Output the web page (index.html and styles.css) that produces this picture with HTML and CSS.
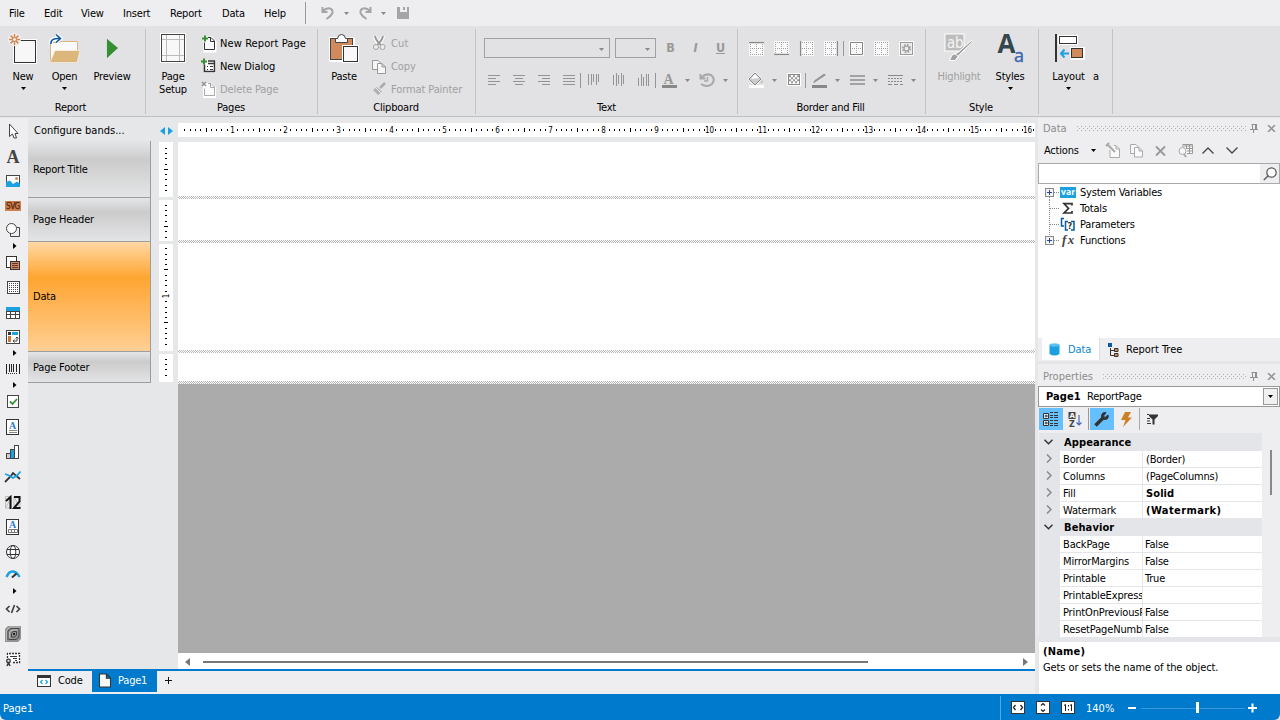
FILE: index.html
```html
<!DOCTYPE html>
<html lang="en">
<head>
<meta charset="utf-8">
<title>Report Designer</title>
<link rel="stylesheet" href="styles.css">
</head>
<body>
<svg class="defs">
  <symbol id="caret" viewBox="0 0 5 3"><path d="M0 0H5L2.5 3Z" fill="currentColor"/></symbol>
  <symbol id="flyout" viewBox="0 0 4 6"><path d="M0 0L3.5 3L0 6Z" fill="#000"/></symbol>
  <symbol id="cells" viewBox="0 0 15 15"><rect width="15" height="15" fill="#fafafa"/><path d="M1 1.5H14M1 7.5H14M1 13.5H14M1.5 1V14M7.5 1V14M13.5 1V14" stroke="#a0a0a0" stroke-dasharray="1 1"/></symbol>
  <symbol id="pin" viewBox="0 0 8 9"><path d="M2.5 0V5M1.500 .5H6M5.500 0V5M6.500 0V5M0 5.500H8M3.500 6V9" fill="none" stroke="#909090"/></symbol>
  <symbol id="close" viewBox="0 0 9 7"><path d="M1 0L8 7M8 0L1 7" stroke="#909090" stroke-width="1.500"/></symbol>
  <symbol id="page" viewBox="0 0 13 15"><path d="M.5 .5H8L12.500 5V14.500H.5ZM8 .5V5H12.500" fill="#f8f8f8" stroke="currentColor" stroke-width="1.200"/></symbol>
  <symbol id="right" viewBox="0 0 6 9"><path d="M1 .5L5 4.500L1 8.500" fill="none" stroke="#888" stroke-width="1.500"/></symbol>
  <symbol id="down" viewBox="0 0 9 6"><path d="M.5 .7L4.500 4.700L8.500 .7" fill="none" stroke="#333" stroke-width="1.500"/></symbol>
  <symbol id="plusbox" viewBox="0 0 9 9"><rect x=".5" y=".5" width="8" height="8" fill="#f4f4f4" stroke="#888"/><path d="M2 4.500H7M4.500 2V7" stroke="#204a9c"/></symbol>
</svg>

<nav class="menubar">
  <span class="m1">File</span><span class="m2">Edit</span><span class="m3">View</span><span class="m4">Insert</span><span class="m5">Report</span><span class="m6">Data</span><span class="m7">Help</span>
  <div class="quick">
    <svg width="13" height="14" viewBox="0 0 13 14"><path d="M1.500 1V6H6.500M2 5Q5 2 8 2.200Q12 2.800 11.500 7Q10 10.500 5.500 13" fill="none" stroke="#a5a5a5" stroke-width="2"/></svg>
    <svg class="caret" width="5" height="3"><use href="#caret"/></svg>
    <svg width="13" height="14" viewBox="0 0 13 14"><path d="M11.500 1V6H6.500M11 5Q8 2 5 2.200Q1 2.800 1.500 7Q3 10.500 7.500 13" fill="none" stroke="#a5a5a5" stroke-width="2"/></svg>
    <svg class="caret" width="5" height="3"><use href="#caret"/></svg>
    <svg width="12" height="12" viewBox="0 0 12 12"><path d="M0 0H3V5H10V0H12V12H0Z M6 0H8V3H6Z" fill="#a5a5a5"/></svg>
  </div>
</nav>

<header class="ribbon">
  <section class="group g-report">
    <div class="tools">
      <button class="big b-new"><svg width="28" height="32" viewBox="0 0 28 32"><rect x="4" y="6" width="24" height="25" fill="#fff"/><rect x="5.500" y="7.500" width="21" height="22" fill="#f7f7f7" stroke="#333"/><circle cx="5.500" cy="6.500" r="6.500" fill="#f4f0ee"/><path d="M5.500 1V12M0 6.500H11M1.600 2.600L9.400 10.400M9.400 2.600L1.600 10.400" stroke="#d18659" stroke-width="1.500"/><circle cx="5.500" cy="6.500" r="2" fill="#f4e8e0" stroke="#d18659"/></svg><b>New</b><svg class="ddl" width="5" height="3"><use href="#caret"/></svg></button>
      <button class="big b-open"><svg width="32" height="32" viewBox="0 0 32 32"><path d="M1.500 30V9.500H10L12 8.500H28.500V18" fill="#fafafa" stroke="#ddb67b"/><path d="M1 29.500L6 17.500H31L28 29.500Z" fill="#ddb67b" stroke="#fff" stroke-width=".5"/><path d="M2 11Q1 5 10 5.500M7 1.500L11.500 5.500L7 9.500" fill="none" stroke="#fff" stroke-width="4"/><path d="M2 11Q1 5 11 5.500M7 1.500L11.500 5.500L7 9.500" fill="none" stroke="#0b5aa6" stroke-width="1.600"/></svg><b>Open</b><svg class="ddl" width="5" height="3"><use href="#caret"/></svg></button>
      <button class="big b-preview"><svg width="14" height="32" viewBox="0 0 14 32"><path d="M1.500 5L13.500 15L1.500 26Z" fill="#388e34" stroke="#fff" stroke-width=".6"/></svg><b>Preview</b></button>
    </div>
    <h3>Report</h3>
  </section>
  <section class="group g-pages">
    <div class="tools">
      <button class="big b-setup"><svg width="26" height="32" viewBox="0 0 26 32"><rect width="26" height="30" y="0" fill="#fff"/><rect x="1.500" y="1.500" width="23" height="27" fill="#f8f8f8" stroke="#444"/><path d="M6.500 2V28M19.500 2V28M2 6.500H24M2 22.500H24" stroke="#bbb"/></svg><b>Page<br>Setup</b></button>
      <ul class="commands">
        <li><svg width="15" height="17" viewBox="0 0 15 17"><path d="M4 3H10.500L14 7V16H4Z" fill="#fff" stroke="#fff" stroke-width="3"/><path d="M3.500 7.500V14.500H13.500V6L10 2.500H7M9.500 3V6.500H13" fill="#fafafa" stroke="#333"/><path d="M1 3.500H7M4 .5V6.500" stroke="#388e34" stroke-width="2"/></svg>New Report Page</li>
        <li><svg width="15" height="17" viewBox="0 0 15 17"><path d="M3 2H15V15H3Z" fill="#fff"/><path d="M3.500 6.500V13.500H13.500V3H7M7 5.500H13.500" fill="none" stroke="#333" stroke-width="1.500"/><path d="M6 8.500H7M9 8.500H12M6 11.500H7M9 11.500H12" stroke="#333"/><path d="M0 3.500H6M3 .5V6.500" stroke="#388e34" stroke-width="2"/></svg>New Dialog</li>
        <li class="off"><svg width="15" height="17" viewBox="0 0 15 17"><path d="M3 3H10.500L14 7V16H3Z" fill="#fff" stroke="#fff" stroke-width="2"/><path d="M3.500 7.500V14.500H13.500V6L10 2.500H7M9.500 3V6.500H13" fill="#fafafa" stroke="#aaa"/><path d="M1 1L5 5M5 1L1 5" stroke="#909090" stroke-width="1.500"/></svg>Delete Page</li>
      </ul>
    </div>
    <h3>Pages</h3>
  </section>
  <section class="group g-clip">
    <div class="tools">
      <button class="big b-paste"><svg width="30" height="32" viewBox="0 0 30 32"><path d="M0 4H26V29H0Z" fill="#fff"/><rect x="1.500" y="5.500" width="22" height="21" fill="#d18a5c" stroke="#444"/><path d="M6.500 9.500V5.500H8.500Q9 1.500 12.500 1.500T16.500 5.500H18.500V9.500Z" fill="#fafafa" stroke="#444"/><rect x="13" y="12" width="17" height="18" fill="#fff"/><rect x="14.500" y="13.500" width="14" height="15" fill="#f8f8f8" stroke="#333"/></svg><b>Paste</b></button>
      <ul class="commands off">
        <li><svg width="15" height="17" viewBox="0 0 15 17"><path d="M3 1Q4 6 9 10M11 1Q10 6 5 10" fill="none" stroke="#fff" stroke-width="4"/><path d="M3 1Q4 6 9.500 10.500M11 1Q10 6 4.500 10.500" fill="none" stroke="#999" stroke-width="2"/><circle cx="4" cy="12" r="2.500" fill="#eee" stroke="#a0a0a0"/><circle cx="10.500" cy="12" r="2.500" fill="#eee" stroke="#a0a0a0"/></svg>Cut</li>
        <li><svg width="15" height="17" viewBox="0 0 15 17"><path d="M.5 2.500H6L8.500 5V11.500H.5Z" fill="#f6f6f6" stroke="#999"/><path d="M5.500 5.500H10L13.500 9V15.500H5.500ZM10 5.500V9H13.500" fill="#f8f8f8" stroke="#999"/></svg>Copy</li>
        <li><svg width="15" height="17" viewBox="0 0 15 17"><path d="M13 2L8 7" stroke="#aaa" stroke-width="2.500"/><path d="M5 6L10 11L6 14L1 9Z" fill="#b0b0b0"/><path d="M4 7L9 12" stroke="#eee"/></svg>Format Painter</li>
      </ul>
    </div>
    <h3>Clipboard</h3>
  </section>
  <section class="group g-text">
    <div class="tools rows">
      <div class="row r-top">
        <div class="field f-font"><svg class="caret" width="5" height="3"><use href="#caret"/></svg></div>
        <div class="field f-size"><svg class="caret" width="5" height="3"><use href="#caret"/></svg></div>
        <span class="ch bold">B</span><span class="ch bold ital">I</span><span class="ch bold under">U</span>
      </div>
      <div class="row">
        <svg width="254" height="20" viewBox="484 70 254 20"><g stroke="#949494"><path d="M488 75.500H500M488 78.500H496M488 81.500H500M488 84.500H496M513 75.500H525M515 78.500H523M513 81.500H525M515 84.500H523M538 75.500H550M542 78.500H550M538 81.500H550M542 84.500H550M563 75.500H575M563 78.500H575M563 81.500H575M563 84.500H575"/><path d="M588.500 74V85M591.500 74V85M593.500 74V82M596.500 74V85M598.500 74V82M613.500 75V85M616.500 73V86M618.500 75V84M621.500 73V86M623.500 75V84M638.500 78V86M641.500 74V86M643.500 77V86M646.500 74V86M648.500 74V86"/><path d="M580.500 73V88M655.500 73V88"/></g><text x="663.500" y="83.500" class="serif-a">A</text><path d="M662 85H677V88H662Z" fill="#888"/><path d="M685 79H690L687.500 82ZM723 79H728L725.500 82Z" fill="#888"/><path d="M700.500 74V78.500H705.500M701.500 77.500Q706 73 711 75Q716 79 712 84Q707 88 701 84" fill="none" stroke="#a8a8a8" stroke-width="2"/><path d="M707.500 77V81H704" fill="none" stroke="#aaa" stroke-width="1.500"/></svg>
      </div>
    </div>
    <h3>Text</h3>
  </section>
  <section class="group g-border">
    <div class="tools rows">
      <div class="row frames">
        <svg width="15" height="15"><use href="#cells"/><path d="M0 1.500H15" stroke="#888" stroke-width="1.500"/></svg><svg width="15" height="15"><use href="#cells"/><path d="M0 13.500H15" stroke="#888" stroke-width="1.500"/></svg><svg width="15" height="15"><use href="#cells"/><path d="M1.500 0V15" stroke="#888" stroke-width="1.500"/></svg><svg class="rule-after" width="15" height="15"><use href="#cells"/><path d="M13.500 0V15" stroke="#888" stroke-width="1.500"/></svg><svg width="15" height="15"><use href="#cells"/><path d="M1.500 1.500H13.500V13.500H1.500Z" fill="none" stroke="#888"/></svg><svg width="15" height="15"><use href="#cells"/></svg><svg width="15" height="15" viewBox="0 0 15 15"><rect width="15" height="15" fill="#fff"/><rect x="1.500" y="1.500" width="12" height="12" fill="#eee" stroke="#999"/><circle cx="7.500" cy="7.500" r="3.700" fill="none" stroke="#aaa" stroke-width="2" stroke-dasharray="1.700 1.200"/><circle cx="7.500" cy="7.500" r="2.500" fill="none" stroke="#999" stroke-width="1.200"/></svg>
      </div>
      <div class="row">
        <svg width="180" height="20" viewBox="745 70 180 20"><path d="M755 72L762 79L755 86L748 79Z" fill="#fff"/><path d="M755 73L761 79L755 85L749 79Z" fill="#ccc" stroke="#888"/><path d="M755 74L759 78L751 79Z" fill="#fff"/><path d="M762 79Q765 84 760 83Z" fill="#c8c8c8"/><path d="M749 85H764V88H749Z" fill="#fff"/><g fill="#888"><path d="M772 79H777L774.500 82ZM835 79H840L837.500 82ZM873 79H878L875.500 82ZM911 79H916L913.500 82Z"/></g><rect x="787" y="73" width="14" height="13" fill="#fff"/><rect x="788.500" y="74.500" width="11" height="10" fill="#fff" stroke="#888"/><path d="M789 76.200H800M789 80.200H800M791 78.200H800M791 82.200H800" stroke="#999" stroke-width="2" stroke-dasharray="2 2"/><path d="M805.500 73V88" stroke="#999"/><path d="M812 84L815 83L827 75L824 73L814 80Z" fill="#999" stroke="#f4f4f4" stroke-width=".8"/><path d="M812 85H827V88H812Z" fill="#888"/><path d="M850 76H865M850 80H865M850 84H865" stroke="#a2a2a2" stroke-width="2"/><path d="M888 75.500H903" stroke="#888"/><path d="M888 78.500H903M888 81.500H903" stroke="#888" stroke-dasharray="2 1"/><path d="M888 84.500H903" stroke="#888" stroke-dasharray="4 2"/></svg>
      </div>
    </div>
    <h3>Border and Fill</h3>
  </section>
  <section class="group g-style">
    <div class="tools">
      <button class="big b-high off"><svg width="30" height="32" viewBox="0 0 30 32"><rect x="1" y="1" width="19" height="17" fill="#bdbdbd" stroke="#fff"/><text x="3" y="14.500" class="ab">ab</text><path d="M27.500 7.500L14 19.500L8 22L5.500 27.500H11L16 21L28.500 9Z" fill="#a0a0a0" stroke="#fff"/><path d="M10 20L15 24" stroke="#fff"/></svg><b>Highlight</b></button>
      <button class="big b-styles"><svg width="28" height="32" viewBox="0 0 28 32"><text x="1.500" y="20" class="big-a">A</text><text x="18" y="29" class="small-a">a</text></svg><b>Styles</b><svg class="ddl" width="5" height="3"><use href="#caret"/></svg></button>
    </div>
    <h3>Style</h3>
  </section>
  <section class="group g-layout">
    <div class="tools">
      <button class="big b-layout"><svg width="30" height="32" viewBox="0 0 30 32"><path d="M2 1V29" stroke="#333" stroke-width="2"/><rect x="4" y="2" width="20" height="10" fill="#fff"/><rect x="5.500" y="3.500" width="17" height="7" fill="#fff" stroke="#333"/><rect x="16" y="14" width="15" height="13" fill="#fff"/><rect x="17.500" y="15.500" width="11" height="9" fill="#d18a5c" stroke="#333"/><path d="M7 20.500H15M10.500 16.500L7 20.500L10.500 24.500" fill="none" stroke="#1ba1e2" stroke-width="2"/></svg><b>Layout</b><svg class="ddl" width="5" height="3"><use href="#caret"/></svg></button>
      <span class="clipped">a</span>
    </div>
  </section>
</header>

<main class="workspace">
  <aside class="toolbox">
    <svg width="16" height="16" viewBox="0 0 16 16"><path d="M4.500 1V13.500L7.500 11L9 15H11.500L10 10.500H13Z" fill="#fff" stroke="#444"/></svg>
    <svg width="16" height="16" viewBox="0 0 16 16"><text x="1.500" y="14" class="tool-a">A</text></svg>
    <svg width="16" height="16" viewBox="0 0 16 16"><rect x="1.500" y="2.500" width="13" height="11" fill="#fff" stroke="#444"/><path d="M1 14V9L5 7.500L8 11L12 8.500L15 11V14Z" fill="#1ba1e2"/><circle cx="11.500" cy="5.500" r="1.500" fill="#d18a5c"/></svg>
    <svg width="16" height="16" viewBox="0 0 16 16"><rect y="3" width="16" height="10" fill="#d0824f"/><text x="1" y="11" class="svg-label" textLength="14">SVG</text></svg>
    <svg width="16" height="16" viewBox="0 0 16 16"><path d="M12 5.500H14.500V14.500H5.500V11" fill="none" stroke="#444"/><circle cx="6.500" cy="6.500" r="5" fill="#fff" stroke="#444"/></svg>
    <svg class="fly" width="4" height="6"><use href="#flyout"/></svg>
    <svg width="16" height="16" viewBox="0 0 16 16"><rect x="1.500" y="1.500" width="10" height="11" fill="#fff" stroke="#333"/><rect x="5.500" y="6.500" width="9" height="8" fill="#d18a5c" stroke="#333"/><path d="M7 8.500H13M7 10.500H13M7 12.500H13" stroke="#633"/></svg>
    <svg width="16" height="16" viewBox="0 0 16 16"><rect x="2.500" y="1.500" width="12" height="12" fill="#fff" stroke="#444"/><path d="M4 3.500H14M4 5.500H14M4 7.500H14M4 9.500H14M4 11.500H14" stroke="#444" stroke-dasharray="1 1"/></svg>
    <svg width="16" height="16" viewBox="0 0 16 16"><rect x="1.500" y="2.500" width="13" height="11" fill="#fff" stroke="#444"/><path d="M1 2H15V6H1Z" fill="#1ba1e2"/><path d="M1 6.500H15M1 9.500H15M5.500 6V14M10.500 6V14" stroke="#444"/></svg>
    <svg width="16" height="16" viewBox="0 0 16 16"><rect x="1.500" y="1.500" width="13" height="13" fill="#fff" stroke="#444"/><path d="M3 3H6V6H3Z" fill="#333"/><path d="M7 3H13V6H7Z" fill="#1ba1e2"/><path d="M3 7H6V13H3Z" fill="#c6783c"/><path d="M12 8V12H8M10.500 9.500L12 8L13.500 9.500M9.500 10.500L8 12L9.500 13.500" fill="none" stroke="#444"/></svg>
    <svg class="fly" width="4" height="6"><use href="#flyout"/></svg>
    <svg width="16" height="16" viewBox="0 0 16 16"><path d="M1.500 3V13M4.500 3V11M6.500 3V11M8.500 3V11M11.500 3V11M14.500 3V13" stroke="#222"/><path d="M3 12.500H13" stroke="#333" stroke-dasharray="1 1"/></svg>
    <svg class="fly" width="4" height="6"><use href="#flyout"/></svg>
    <svg width="16" height="16" viewBox="0 0 16 16"><rect x="2.500" y="1.500" width="11" height="12" fill="#fff" stroke="#444"/><path d="M5 7.500L7.500 10L12 5" fill="none" stroke="#388e34" stroke-width="1.800"/></svg>
    <svg width="16" height="16" viewBox="0 0 16 16"><rect x="1.500" y=".5" width="12" height="15" fill="#fff" stroke="#333"/><text x="4" y="9.500" class="doc-a">A</text><path d="M4 11.500H12M4 13.500H12" stroke="#888"/></svg>
    <svg width="16" height="16" viewBox="0 0 16 16"><rect x="1.500" y="9.500" width="4" height="5" fill="#ccc" stroke="#444"/><rect x="5.500" y="5.500" width="4" height="9" fill="#1ba1e2" stroke="#444"/><rect x="9.500" y="1.500" width="4" height="13" fill="#fff" stroke="#444"/></svg>
    <svg width="16" height="16" viewBox="0 0 16 16"><path d="M0 13L6 7L8 4L15 10" fill="none" stroke="#333" stroke-width="1.800"/><path d="M0 5L4 6.500L8 9L12 6.500L15.500 2.500" fill="none" stroke="#1ba1e2" stroke-width="1.800"/></svg>
    <svg width="16" height="16" viewBox="0 0 16 16"><path d="M.5 2.500H6V14H.5ZM9 2.500H15V14H9ZM1 13L6 4M9 3L15 14" fill="none" stroke="#bbb"/><path d="M1 7L5.500 3V15M9 3H14.500V7.500L9 14H15.500" fill="none" stroke="#111" stroke-width="2"/></svg>
    <svg width="16" height="16" viewBox="0 0 16 16"><rect x="1.500" y=".5" width="12" height="15" fill="#fff" stroke="#333"/><text x="4" y="9" class="doc-a">A</text><path d="M3.500 10.500H12.500V13.500H3.500ZM6.500 10V14M9.500 10V14" fill="none" stroke="#777"/></svg>
    <svg width="16" height="16" viewBox="0 0 16 16"><circle cx="8" cy="8" r="6.500" fill="#fff" stroke="#333"/><ellipse cx="8" cy="8" rx="2.800" ry="6.500" fill="none" stroke="#333"/><path d="M2 5.500H14M2 10.500H14" stroke="#333"/></svg>
    <svg width="16" height="16" viewBox="0 0 16 16"><path d="M1.500 10Q4 4 8 4.500T14.500 10" fill="none" stroke="#1ba1e2" stroke-width="2.500"/><path d="M7 10.500L11.500 6.500" stroke="#333" stroke-width="2"/></svg>
    <svg class="fly" width="4" height="6"><use href="#flyout"/></svg>
    <svg width="16" height="16" viewBox="0 0 16 16"><path d="M4.500 5L1.500 8L4.500 11M11.500 5L14.500 8L11.500 11M9.500 4L6.500 12" fill="none" stroke="#444" stroke-width="1.700"/></svg>
    <svg width="16" height="16" viewBox="0 0 16 16"><path d="M3 0H16V13L13 16H0V3Z" fill="#929292"/><path d="M3 14V5L6 2.500H14V11L11 13.500H4M6.500 11V7.500L8 5.500H11.500V9L10 11H6.500" fill="none" stroke="#444"/><path d="M1.500 15V4L5 1H15M4.500 12V6L7 4H13" fill="none" stroke="#ccc" stroke-width=".7"/><path d="M8 7H10V9H8Z" fill="#222"/></svg>
    <svg width="16" height="16" viewBox="0 0 16 16"><path d="M2.500 7V2.500H14.500V11.500H7" fill="#fff" stroke="#333" stroke-width="1.300" stroke-dasharray="2 1"/><path d="M5 5.500H12M8 7.500H12M10 9.500H12" stroke="#333"/><circle cx="3.500" cy="10" r="1.800" fill="none" stroke="#333" stroke-width="1.300"/><path d="M2 15L3.500 12L5 15" fill="none" stroke="#333" stroke-width="1.500"/></svg>
  </aside>

  <section class="designer">
    <div class="surface">
      <div class="bands">
        <div class="configure">Configure bands...</div>
        <div class="band b1">Report Title</div>
        <div class="band b2">Page Header</div>
        <div class="band data b3">Data</div>
        <div class="band b4">Page Footer</div>
      </div>
      <div class="vrulers">
        <svg class="arrows" width="13" height="8" viewBox="0 0 13 8"><path d="M5 0V8L0 4ZM8 0V8L13 4Z" fill="#1ba1e2"/></svg>
        <svg class="vr" width="14" height="55" data-offset="0.8"></svg>
        <svg class="vr" width="14" height="41" data-offset="-0.1"></svg>
        <svg class="vr" width="14" height="107" data-offset="-0.6"></svg>
        <svg class="vr" width="14" height="28" data-offset="0"></svg>
      </div>
      <div class="canvas">
        <svg class="hr" width="857" height="14"></svg>
        <div class="sheet p1"></div><div class="sheet p2"></div><div class="sheet p3"></div><div class="sheet p4"></div>
        <div class="void"></div>
        <div class="hscroll"><svg width="5" height="8" viewBox="0 0 5 8"><path d="M5 0V8L0 4Z" fill="#777"/></svg><i></i><svg width="5" height="8" viewBox="0 0 5 8"><path d="M0 0V8L5 4Z" fill="#777"/></svg></div>
      </div>
    </div>
    <footer class="tabs">
      <span class="tab code"><svg width="14" height="12" viewBox="0 0 14 12"><rect x=".5" y=".5" width="13" height="11" fill="#fff" stroke="#333"/><path d="M0 0H14V3H0Z" fill="#333"/><path d="M5.500 5L3.500 7L5.500 9M8.500 5L10.500 7L8.500 9" fill="none" stroke="#1ba1e2" stroke-width="1.200"/></svg>Code</span>
      <span class="tab current"><svg class="ink" width="12" height="15"><use href="#page"/></svg>Page1</span>
      <span class="tab add"><svg width="7" height="7" viewBox="0 0 7 7"><path d="M0 3.500H7M3.500 0V7" stroke="#111"/></svg></span>
    </footer>
  </section>

  <aside class="side">
    <div class="caption c1"><span>Data</span><i></i><svg width="8" height="9"><use href="#pin"/></svg><svg width="9" height="7"><use href="#close"/></svg></div>
    <div class="actions">Actions
      <svg width="5" height="3"><use href="#caret"/></svg>
      <svg width="15" height="15" viewBox="0 0 15 15"><path d="M4 7V14.500H13.500V6L10 2.500H8M10 3V6H13" fill="#fafafa" stroke="#aaa"/><path d="M1 1L9 9M0 3L3 0" stroke="#aaa" stroke-width="2"/></svg>
      <svg width="14" height="15" viewBox="0 0 14 15"><path d="M.5 1.500H6L8.500 4V10.500H.5Z" fill="#f6f6f6" stroke="#aaa"/><path d="M4.500 4.500H9L12.500 8V14H4.500ZM9 4.500V8H12.500" fill="#fafafa" stroke="#aaa"/></svg>
      <svg width="11" height="10" viewBox="0 0 11 10"><path d="M1 .5L10 9.500M10 .5L1 9.500" stroke="#999" stroke-width="1.800"/></svg>
      <svg width="15" height="14" viewBox="0 0 15 14"><path d="M4.500 .5H14.500V9.500H9M4 2H14M9 4.500H14M9 7H14M8.500 1V5M11.500 1V9" fill="#fafafa" stroke="#999"/><circle cx="4.500" cy="7" r="3.500" fill="#f6f6f6" stroke="#aaa"/><path d="M6 10L8 13" stroke="#aaa" stroke-width="2"/></svg>
      <svg width="12" height="7" viewBox="0 0 12 7"><path d="M.5 6.500L6 1L11.500 6.500" fill="none" stroke="#444" stroke-width="1.300"/></svg>
      <svg width="12" height="7" viewBox="0 0 12 7"><path d="M.5 .5L6 6L11.500 .5" fill="none" stroke="#444" stroke-width="1.300"/></svg>
    </div>
    <div class="search"><span><svg width="14" height="14" viewBox="0 0 14 14"><circle cx="8.500" cy="5.500" r="4.700" fill="#fff" stroke="#555" stroke-width="1.200"/><path d="M5 9L.8 13" stroke="#555" stroke-width="1.300"/></svg></span></div>
    <ul class="tree">
      <li><svg width="42" height="16" viewBox="0 0 42 16"><path d="M16 8.500H22M11.500 13V16" stroke="#888" stroke-dasharray="1 1"/><use href="#plusbox" x="7" y="4" width="9" height="9"/><rect x="22" y="3" width="16" height="11" fill="#1ba1e2"/><text x="23" y="11" class="var" textLength="14">var</text></svg>System Variables</li>
      <li><svg width="42" height="16" viewBox="0 0 42 16"><path d="M12 8.500H22M11.500 0V16" stroke="#888" stroke-dasharray="1 1"/><path d="M34 5.500V3.700H26L30.500 8.500L26 13H34V11" fill="none" stroke="#333" stroke-width="1.700"/></svg>Totals</li>
      <li><svg width="42" height="16" viewBox="0 0 42 16"><path d="M12 8.500H22M11.500 0V16" stroke="#888" stroke-dasharray="1 1"/><path d="M26 2.500H23.500V10H26M30 5.500H27.500V14H30M33 5.500H36V14H33" fill="none" stroke="#0b5aa6" stroke-width="1.500"/><text x="29.500" y="12.500" class="query">?</text></svg>Parameters</li>
      <li><svg width="42" height="16" viewBox="0 0 42 16"><path d="M16 8.500H22M11.500 0V4" stroke="#888" stroke-dasharray="1 1"/><use href="#plusbox" x="7" y="4" width="9" height="9"/><text x="24" y="12" class="fx" textLength="12">fx</text></svg>Functions</li>
    </ul>
    <div class="dock"><span class="on"><svg width="11" height="13" viewBox="0 0 11 13"><path d="M.5 2V11Q5.500 14 10.500 11V2Z" fill="#1ba1e2"/><ellipse cx="5.500" cy="2" rx="5" ry="1.700" fill="#5cc0f0"/></svg>Data</span><span><svg width="11" height="14" viewBox="0 0 11 14"><path d="M0 0H4V4H0Z" fill="#0b5aa6"/><path d="M2.500 5V12.500H6M2.500 7.500H6" fill="none" stroke="#333"/><path d="M6.500 5.500H10V8.500H6.500ZM6.500 10.500H10V13.500H6.500Z" fill="#d18a5c" stroke="#333"/></svg>Report Tree</span></div>
    <div class="caption c2"><span>Properties</span><i></i><svg width="8" height="9"><use href="#pin"/></svg><svg width="9" height="7"><use href="#close"/></svg></div>
    <div class="combo"><b>Page1</b><span>ReportPage</span><i><svg width="5" height="3"><use href="#caret"/></svg></i></div>
    <div class="ptools">
      <span class="on"><svg width="16" height="15" viewBox="0 0 16 15"><path d="M.5 1.500H5.500V6.500H.5ZM.5 8.500H5.500V13.500H.5Z" fill="#fff" stroke="#333"/><path d="M1.500 4H5M3 2.500V5.500M1.500 11H5M3 9.500V12.500" stroke="#333"/><path d="M7 .5H10M11 .5H15M7 3.500H10M11 3.500H15M7 5.500H10M11 5.500H15M7 8.500H10M11 8.500H15M7 11.500H10M11 11.500H15M7 13.500H10M11 13.500H15" stroke="#333"/></svg></span>
      <span class="az"><svg width="15" height="15" viewBox="0 0 15 15"><rect x=".5" y="0" width="7" height="7" fill="#444"/><text x="1.500" y="6" class="a-inv">A</text><text x="1" y="14.500" class="z">Z</text><path d="M11 3V13M8.500 10.500L11 13L13.500 10.500" fill="none" stroke="#4a68b8" stroke-width="1.200"/></svg></span>
      <span class="on"><svg width="16" height="16" viewBox="0 0 16 16"><path d="M1.500 14.500L9 7" stroke="#333" stroke-width="3.500"/><path d="M14 4L11 6.500L9.500 5L12 1.700Q8 .8 7.500 5Q8 9 11.500 8.500Q15 8 14 4" fill="#333" stroke="#333"/></svg></span>
      <span class="bolt"><svg width="11" height="15" viewBox="0 0 11 15"><path d="M4 0H10L7 5.500H11L2 15L4.500 8H0Z" fill="#cd8124"/></svg></span>
      <span class="filter"><svg width="11" height="11" viewBox="0 0 11 11"><path d="M2 .5H11V2L7.500 5.500V10.500H5.500V5.500L2 2Z" fill="#333"/><path d="M0 .5H2M0 4.500H3M0 7H3M0 9.500H4" stroke="#333"/></svg></span>
    </div>
    <div class="pgrid">
      <div class="plist">
        <div class="cat"><svg width="9" height="6"><use href="#down"/></svg><b>Appearance</b></div>
        <div class="prop sub"><svg width="6" height="9"><use href="#right"/></svg><span>Border</span><em>(Border)</em></div>
        <div class="prop sub"><svg width="6" height="9"><use href="#right"/></svg><span>Columns</span><em>(PageColumns)</em></div>
        <div class="prop sub"><svg width="6" height="9"><use href="#right"/></svg><span>Fill</span><em class="strong">Solid</em></div>
        <div class="prop sub"><svg width="6" height="9"><use href="#right"/></svg><span>Watermark</span><em class="strong wide">(Watermark)</em></div>
        <div class="cat"><svg width="9" height="6"><use href="#down"/></svg><b>Behavior</b></div>
        <div class="prop"><span>BackPage</span><em>False</em></div>
        <div class="prop"><span>MirrorMargins</span><em>False</em></div>
        <div class="prop"><span>Printable</span><em>True</em></div>
        <div class="prop"><span>PrintableExpression</span><em></em></div>
        <div class="prop"><span>PrintOnPreviousPage</span><em>False</em></div>
        <div class="prop"><span>ResetPageNumber</span><em>False</em></div>
      </div>
      <div class="vscroll"><i></i></div>
    </div>
    <div class="help"><b>(Name)</b><p>Gets or sets the name of the object.</p></div>
  </aside>
</main>

<footer class="status">
  <span class="where">Page1</span>
  <div class="zoombar">
    <svg width="14" height="13" viewBox="0 0 14 13"><rect x=".5" y=".5" width="13" height="12" fill="#fff" stroke="#333"/><path d="M4.500 4L2.500 6.500L4.500 9M9.500 4L11.500 6.500L9.500 9" fill="none" stroke="#222" stroke-width="1.300"/></svg>
    <svg width="14" height="13" viewBox="0 0 14 13"><rect x=".5" y=".5" width="13" height="12" fill="#fff" stroke="#333"/><path d="M5 4.500L7 2.500L9 4.500M5 8.500L7 10.500L9 8.500" fill="none" stroke="#222" stroke-width="1.200"/></svg>
    <svg width="14" height="13" viewBox="0 0 14 13"><rect x=".5" y=".5" width="13" height="12" fill="#fff" stroke="#333"/><path d="M3 4.500L4.500 3.500V10M9 4.500L10.500 3.500V10M7.500 4V5.500M7.500 8V9.500" fill="none" stroke="#222"/></svg>
    <span class="pct">140%</span>
    <svg class="slider" width="130" height="14" viewBox="0 0 130 14"><path d="M1 7H9M121 7H130M125.500 2.500V11.500" stroke="#fff" stroke-width="2"/><path d="M14 7.500H118" stroke="#3c96da"/><path d="M69 1H72V12H69Z" fill="#fff"/></svg>
  </div>
</footer>
<script src="rulers.js"></script>
</body>
</html>
```

FILE: styles.css
```css
* { box-sizing: border-box; }
body { margin: 0; width: 1280px; height: 720px; overflow: hidden; display: flex; flex-direction: column; background: #e6e7e9; color: #000; font: 11px/14px "DejaVu Sans Condensed", "DejaVu Sans", sans-serif; font-stretch: condensed; letter-spacing: -0.2px; }
ul, h3, p { margin: 0; padding: 0; list-style: none; font: inherit; }
b { font-weight: normal; }
i, em { font-style: normal; }
svg { flex: none; overflow: visible; display: block; }
.defs { display: none; }
button { border: 0; background: none; padding: 0; margin: 0; font: inherit; color: inherit; letter-spacing: inherit; }
.caret { color: #888; }
.off, .off .big { color: #a0a0a0; }

.menubar { height: 26px; background: #eeeef0; display: flex; align-items: center; padding-left: 9px; flex: none; }
.menubar span { padding-top: 2px; }
.m1 { width: 35px; } .m2 { width: 37px; } .m3 { width: 42px; } .m4 { width: 47px; } .m5 { width: 52px; } .m6 { width: 42px; } .m7 { width: 41px; }
.quick { display: flex; align-items: center; border-left: 1px solid #999; height: 22px; padding-left: 15px; gap: 10px; }
.quick svg:nth-child(3) { margin-right: -1px; }
.quick svg:nth-child(5) { margin-left: 1px; }

.ribbon { height: 91px; background: #e2e2e4; border-bottom: 1px solid #bfc0c2; display: flex; padding: 3px 0 2px; flex: none; }
.group { border-right: 1px solid #c2c3c5; display: flex; flex-direction: column; justify-content: space-between; }
.group h3 { text-align: center; height: 12px; line-height: 12px; }
.g-report { width: 146px; } .g-report h3 { padding-right: 4px; }
.g-pages { width: 172px; } .g-pages h3, .g-clip h3 { padding-right: 1px; }
.g-clip { width: 158px; } .g-text { width: 262px; } .g-border { width: 188px; } .g-style { width: 113px; } .g-layout { width: 74px; }
.g-border h3, .g-style h3 { padding-right: 2px; }
.tools { display: flex; height: 69px; }
.big { display: flex; flex-direction: column; align-items: center; padding-top: 4px; flex: none; }
.big b { line-height: 13px; margin-top: 5px; }
.big .ddl { margin-top: 4px; }
.b-new { width: 46px; margin-right: -2px; } .b-open { width: 41px; margin-right: -1px; } .b-preview { width: 56px; }
.b-setup { width: 54px; } .b-paste { width: 52px; }
.b-high { width: 66px; } .b-styles { width: 36px; } .b-layout { width: 59px; }
.clipped { padding-top: 41px; margin-left: -5px; }
.commands { padding: 3px 0 0 1px; letter-spacing: -0.1px; }
.commands li { display: flex; align-items: center; height: 23px; gap: 4px; white-space: nowrap; }
.commands li:first-child { letter-spacing: 0.1px; }
.g-clip .commands { padding-left: 2px; }

.rows { flex-direction: column; padding-left: 8px; padding-top: 9px; gap: 12px; }
.row { display: flex; align-items: center; height: 20px; }
.field { border: 1px solid #a0a0a0; height: 20px; display: flex; align-items: center; justify-content: flex-end; padding-right: 5px; padding-top: 2px; }
.f-font { width: 126px; } .f-size { width: 41px; margin-left: 5px; margin-right: 2px; }
.ch { width: 25px; text-align: center; color: #999; font-size: 12.500px; }
.bold { font-weight: bold; } .ital { font-style: italic; } .under { text-decoration: underline; }
.g-border .rows { padding-left: 7px; }
.frames { padding-left: 4px; gap: 10px; }
.rule-after { box-shadow: 4px 0 0 #e2e2e4, 5px 0 0 #999; }
.serif-a { font: bold 14px "Liberation Serif", serif; fill: #999; }
.ab { font: 15px "DejaVu Sans Condensed", sans-serif; fill: #f5f5f5; }
.big-a { font: bold 26px "Open Sans", sans-serif; fill: #36464d; letter-spacing: 0; }
.small-a { font: 18px "Open Sans", sans-serif; fill: #3765ae; stroke: #3765ae; stroke-width: .4px; }

.workspace { flex: 1; display: flex; min-height: 0; padding-top: 1px; }
.toolbox { width: 28px; background: #eeeef0; padding-left: 5px; display: grid; align-items: center; grid-template-rows: 26px 26px 22px 28px 20px 11px 24px 25px 26px 22px 9px 24px 7px 28px 22px 28px 22px 28px 22px 28px 18px 14px 22px 28px 22px; align-content: start; }
.fly { margin-left: 8px; }
.tool-a { font: bold 18px "Liberation Serif", serif; fill: #444; }
.svg-label { font: 8px "DejaVu Sans Condensed", sans-serif; fill: #572b12; stroke: #572b12; stroke-width: .3px; }
.doc-a { font: bold 10px "Liberation Serif", serif; fill: #2a7bd0; }

.designer { width: 1007px; display: flex; flex-direction: column; }
.surface { height: 551px; display: flex; }
.bands { width: 123px; display: flex; flex-direction: column; }
.configure { height: 23px; padding: 6px 0 0 6px; white-space: nowrap; letter-spacing: 0; }
.band { border: solid #9c9d9f; border-width: 0 1px 1px 0; padding: 2px 0 0 5px; display: flex; align-items: center; background: linear-gradient(#e5e6e8, #cbcbcb 33%, #cecece 40%, #e3e4e6); }
.b1 { height: 57px; } .b2 { height: 44px; padding-top: 1px; } .b3 { height: 110px; padding-top: 0; } .b4 { height: 31px; }
.data { background: linear-gradient(#ffd8a4, #ffa531 33%, #ffcf94); }
.vrulers { width: 27px; padding: 9px 0 0 8px; }
.arrows { margin: 0 0 7px 1px; }
.vr { background: #fff; margin-bottom: 3px; overflow: hidden; }
.canvas { width: 857px; display: flex; flex-direction: column; padding-top: 5px; }
.hr { background: #fff; margin-bottom: 5px; overflow: hidden; }
.num { font: 8px "DejaVu Sans Condensed", sans-serif; text-anchor: middle; letter-spacing: -0.2px; }
.sheet { background: #fff; display: flex; align-items: flex-end; }
.sheet::after { content: ""; height: 3px; width: 100%; background: repeating-conic-gradient(#b8b8b8 0 25%, #fff 0 50%) 0 0 / 2px 2px; }
.p1 { height: 57px; } .p2 { height: 44px; } .p3 { height: 110px; } .p4 { height: 31px; }
.void { flex: 1; background: #ababab; }
.hscroll { height: 16px; background: #fff; display: flex; align-items: center; padding: 1px 7px 0; }
.hscroll i { width: 665px; height: 2px; background: #777; margin: 0 155px 0 13px; }
.tabs { height: 25px; border-top: 2px solid #007acc; background: #eeeef0; display: flex; }
.tab { display: flex; align-items: center; height: 21px; padding-bottom: 2px; }
.code { width: 64px; padding-left: 9px; gap: 7px; }
.current { width: 65px; background: #007acc; color: #fff; padding-left: 7px; gap: 7px; }
.ink { color: #333; }
.add { padding-left: 8px; }

.side { width: 242px; margin-left: 3px; background: #eeeef0; display: flex; flex-direction: column; }
.caption { height: 21px; display: flex; align-items: center; color: #8c8c8c; padding: 0 4px 0 5px; flex: none; }
.caption span { width: 34px; letter-spacing: 0; }
.caption i { width: 170px; height: 5px; background: conic-gradient(at 1px 1px, transparent 75%, #b0b0b2 0) 0 0 / 4px 4px, conic-gradient(at 1px 1px, transparent 75%, #b0b0b2 0) 2px 2px / 4px 4px; }
.caption svg:nth-child(3) { margin: 0 9px 0 3px; }
.c2 { height: 20px; margin-top: 2px; }
.c2 span { width: 60px; padding-top: 1px; } .c2 i { width: 144px; }
.actions { height: 24px; display: flex; align-items: center; padding: 0 0 1px 6px; }
.actions svg:nth-child(1) { margin-left: 12px; margin-right: 10px; }
.actions svg:nth-child(2) { margin-right: 9px; }
.actions svg:nth-child(3) { margin-right: 11px; }
.actions svg:nth-child(4) { margin-right: 12px; }
.actions svg:nth-child(5) { margin-right: 9px; }
.actions svg:nth-child(6) { margin-right: 12px; }
.search { height: 21px; background: #fff; border: 1px solid #aaa; display: flex; justify-content: flex-end; }
.search span { width: 19px; background: #eeeef0; display: flex; align-items: center; justify-content: center; }
.tree { height: 154px; background: #fff; }
.tree li { height: 16px; display: flex; align-items: center; padding-top: 2px; }
.tree svg { margin-top: -2px; }
.var { font: bold 8.500px "Open Sans", sans-serif; fill: #fff; }
.query { font: bold 8px "DejaVu Sans", sans-serif; fill: #333; }
.fx { font: italic bold 13px "Liberation Serif", serif; fill: #444; }
.dock { height: 26px; border-bottom: 3px solid #e4e5e7; display: flex; padding-left: 4px; }
.dock span { display: flex; align-items: center; gap: 7px; height: 22px; padding-left: 8px; padding-top: 1px; letter-spacing: 0; }
.dock .on { width: 58px; background: #fff; color: #0e86cf; border-right: 1px solid #ddd; padding-left: 7px; gap: 8px; letter-spacing: -0.1px; }
.combo { height: 21px; background: #fff; border: 1px solid #999; display: flex; align-items: center; padding-left: 7px; }
.combo b { width: 41px; padding-top: 1px; } .combo span { flex: 1; padding-top: 1px; }
.combo i { width: 15px; height: 17px; margin-right: 1px; border: 1px solid #999; background: #f0f0f0; display: flex; align-items: center; justify-content: center; }
.combo b, .cat b, .strong, .help b { font-weight: bold; letter-spacing: 0.1px; }
.wide { letter-spacing: 0.4px; }
.ptools { height: 26px; padding: 1px 0 0 1px; display: flex; }
.ptools span { width: 24px; height: 22px; display: flex; align-items: center; justify-content: center; }
.ptools .on { background: #66c0ff; }
.ptools .az { width: 26px; border-right: 1px solid #999; margin-right: 1px; }
.ptools .bolt { border-right: 1px solid #aaa; width: 26px; }
.a-inv { font: bold 7px "DejaVu Sans", sans-serif; fill: #fff; }
.z { font: bold 8px "DejaVu Sans", sans-serif; fill: #444; }
.pgrid { height: 204px; margin-left: 1px; display: flex; }
.plist { width: 223px; background: #e4e5e8; }
.cat, .prop { height: 17px; display: flex; align-items: center; }
.cat { padding-left: 5px; gap: 11px; }
.cat b { padding-top: 2px; }
.prop { position: relative; padding-left: 21px; }
.prop svg { position: absolute; left: 7px; top: 4px; }
.prop span, .prop em { background: #fff; height: 16px; line-height: 18px; overflow: hidden; white-space: nowrap; }
.prop span { flex: none; width: 83px; border-right: 1px solid #e4e5e8; padding-left: 3px; letter-spacing: -0.15px; }
.prop em { width: 119px; padding-left: 2px; }
.prop.sub em { padding-left: 3px; }
.vscroll { flex: 1; padding: 17px 0 0 8px; }
.vscroll i { display: block; width: 2px; height: 45px; background: #888; }
.help { flex: 1; border-top: 5px solid #e4e5e8; border-left: 1px solid #e4e5e8; background: #fff; padding: 3px 4px; }
.help b { letter-spacing: 0.2px; }
.help p { margin-top: 2px; letter-spacing: -0.1px; }

.status { height: 26px; background: #007acc; color: #fff; display: flex; align-items: center; justify-content: space-between; padding: 1px 23px 0 3px; border-radius: 0 0 6px 6px; flex: none; }
.where { padding-top: 2px; letter-spacing: 0; }
.zoombar { display: flex; align-items: center; gap: 11px; border-left: 1px solid #55a7df; height: 24px; padding-left: 10px; }
.pct { width: 30px; padding-top: 2px; letter-spacing: 0; }
```

FILE: rulers.js
```js
const NS = "http://www.w3.org/2000/svg";
const CM = 53.03;

function add(parent, tag, attrs, text) {
  const node = document.createElementNS(NS, tag);
  for (const key in attrs) node.setAttribute(key, attrs[key]);
  if (text) node.textContent = text;
  parent.appendChild(node);
}

function drawRuler(svg, length, origin, vertical) {
  for (let i = 1; origin + i * CM / 10 < length - 3; i++) {
    const p = Math.round(origin + i * CM / 10 - 0.5);
    if (i % 10 === 0) {
      const attrs = vertical
        ? { x: 0, y: 0, class: "num", transform: `translate(10 ${p}) rotate(-90)` }
        : { x: p + 0.5, y: 10, class: "num" };
      add(svg, "text", attrs, String(i / 10));
      continue;
    }
    const size = i % 5 === 0 ? 4 : 2;
    const start = 7 - size / 2;
    add(svg, "rect", vertical
      ? { x: start, y: p, width: size, height: 1 }
      : { x: p, y: start, width: 1, height: size });
  }
}

drawRuler(document.querySelector(".hr"), 860, 1.5, false);
document.querySelectorAll(".vr").forEach(svg => {
  const length = Number(svg.getAttribute("height"));
  drawRuler(svg, Math.min(length, 106), Number(svg.dataset.offset), true);
});
```
